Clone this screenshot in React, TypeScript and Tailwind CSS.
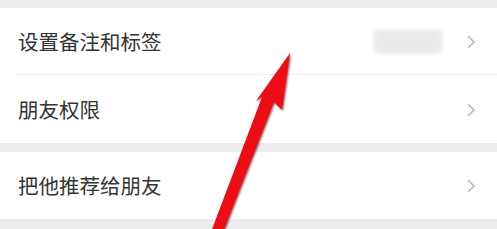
import React from "react";

const Chevron = () => (
  <svg width="10" height="16" viewBox="0 0 10 16" className="shrink-0">
    <path d="M2 2 L8 8 L2 14" fill="none" stroke="#b5b5b5" strokeWidth="1.5" />
  </svg>
);

const Row = ({ label, value, divider }: { label: string; value?: boolean; divider?: boolean }) => (
  <div className="relative flex h-[67px] items-center bg-white pl-[18px] pr-[21px]">
    <span className="flex-1 text-[20.5px] leading-none text-[#333333]">{label}</span>
    {value && <div className="mr-[24px] h-[24px] w-[68px] rounded-sm bg-[#e9e9e9] blur-[2px]" />}
    <Chevron />
    {divider && <div className="absolute bottom-0 left-[16px] right-0 h-px bg-[#ececec]" />}
  </div>
);

export default function App() {
  return (
    <div
      className="relative h-[229px] w-[497px] overflow-hidden bg-[#ededed] pt-[8px]"
      style={{ fontFamily: '"Noto Sans CJK SC", "Noto Sans", sans-serif' }}
    >
      <Row label="设置备注和标签" value divider />
      <div className="h-px bg-white" />
      <Row label="朋友权限" />
      <div className="h-[9px]" />
      <Row label="把他推荐给朋友" />
      <svg className="absolute left-0 top-0" width="497" height="229" viewBox="0 0 497 229">
        <defs>
          <filter id="sh" x="-20%" y="-20%" width="140%" height="140%">
            <feDropShadow dx="1" dy="1" stdDeviation="1" floodColor="#5a0000" floodOpacity="0.7" />
          </filter>
        </defs>
        <polygon
          points="290,53 282,110 274,102 223,232 211,232 262,97 256,101"
          fill="#ec1117"
          filter="url(#sh)"
        />
      </svg>
    </div>
  );
}
